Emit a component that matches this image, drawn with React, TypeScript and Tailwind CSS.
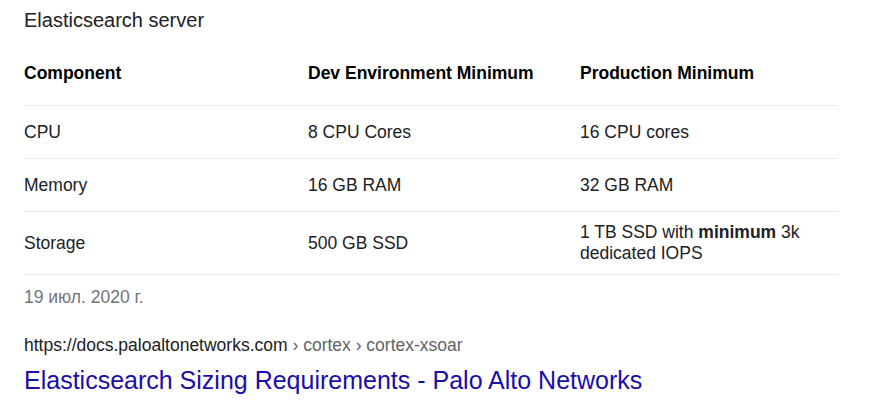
const rows: { name: string; dev: string; prod: React.ReactNode; h: string }[] = [
  { name: "CPU", dev: "8 CPU Cores", prod: "16 CPU cores", h: "h-[53px]" },
  { name: "Memory", dev: "16 GB RAM", prod: "32 GB RAM", h: "h-[53px]" },
  {
    name: "Storage",
    dev: "500 GB SSD",
    prod: (
      <>
        1 TB SSD with <b className="font-bold">minimum</b> 3k dedicated IOPS
      </>
    ),
    h: "h-[63px]",
  },
];

export default function App() {
  return (
    <main className="min-h-screen bg-white pl-6 pt-[7px] font-['Liberation_Sans',Arial,sans-serif]">
      <h2 className="text-[20px] leading-[26px] text-[#202124]">Elasticsearch server</h2>

      <div className="mt-[30px] w-[814px] text-[17.5px] text-[#202124]">
        <div className="grid h-[43px] grid-cols-[284px_272px_258px] border-b border-[#ebebeb] font-bold leading-[21px] text-black">
          <div>Component</div>
          <div>Dev Environment Minimum</div>
          <div>Production Minimum</div>
        </div>
        {rows.map((r) => (
          <div
            key={r.name}
            className={`grid grid-cols-[284px_272px_258px] items-center border-b border-[#ebebeb] leading-[21px] ${r.h}`}
          >
            <div>{r.name}</div>
            <div>{r.dev}</div>
            <div className="pr-6">{r.prod}</div>
          </div>
        ))}
      </div>

      <div className="mt-[11px] text-[17.5px] leading-[22px] text-[#70757a]">19 июл. 2020 г.</div>

      <div className="mt-[26px] text-[17.5px] leading-[22px]">
        <span className="text-[#202124]">https://docs.paloaltonetworks.com</span>
        <span className="text-[#5f6368]"> › cortex › cortex-xsoar</span>
      </div>
      <a href="#" className="mt-[9px] block text-[25px] leading-[30px] text-[#1a0dab]">
        Elasticsearch Sizing Requirements - Palo Alto Networks
      </a>
    </main>
  );
}
